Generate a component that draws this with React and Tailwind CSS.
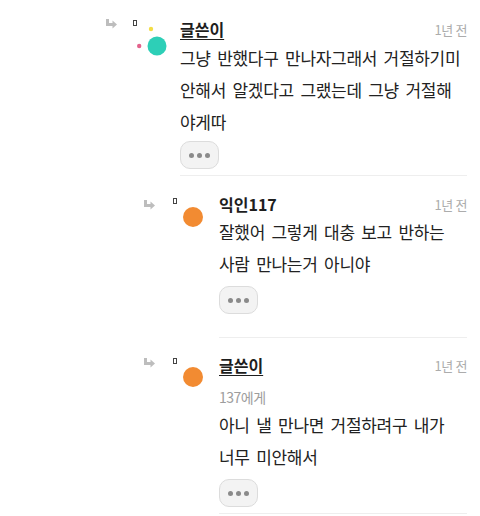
import React from "react";

const font = { fontFamily: '"Noto Sans CJK KR", "Noto Sans", sans-serif' };

const ReplyArrow = ({ className }) => (
  <svg viewBox="0 0 12 10" width="12" height="10" className={className}>
    <path d="M1 0 H4 V4 H7.5 V1.5 L12 5.5 L7.5 9.5 V7 H1 Z" fill="#bdbdbd" />
  </svg>
);

const Tofu = ({ className }) => (
  <span className={"block w-[4px] h-[6px] border border-[#444] " + className} />
);

const MoreButton = ({ className }) => (
  <button className={"flex h-[28px] w-[39px] items-center justify-center gap-[3px] rounded-[10px] border border-[#dcdcdc] bg-[#f3f3f3] " + className}>
    <span className="h-[5px] w-[5px] rounded-full bg-[#8a8a8a]" />
    <span className="h-[5px] w-[5px] rounded-full bg-[#8a8a8a]" />
    <span className="h-[5px] w-[5px] rounded-full bg-[#8a8a8a]" />
  </button>
);

const Name = ({ children, underline }) => (
  <div className="flex items-start justify-between">
    <span
      className={
        "text-[16px] font-bold leading-[20px] text-[#1e1e1e] " +
        (underline ? "underline decoration-1 underline-offset-[3px]" : "")
      }
    >
      {children}
    </span>
    <span className="pt-[2px] text-[13px] leading-[18px] tracking-[-0.4px] text-[#acacac]">1년 전</span>
  </div>
);

const Body = ({ lines, className }) => (
  <div
    className={"text-[17px] leading-[32px] tracking-[-0.3px] [word-spacing:3px] text-[#222] " + className}
  >
    {lines.map((l) => (
      <div key={l} className="whitespace-nowrap">
        {l}
      </div>
    ))}
  </div>
);

export default function App() {
  return (
    <div className="min-h-[516px] w-[480px] bg-white" style={font}>
      {/* 글쓴이 첫 댓글 */}
      <div className="flex items-start pl-[105px]">
        <ReplyArrow className="mt-[19px] shrink-0" />
        <Tofu className="ml-[16px] mt-[20px] shrink-0" />
        <svg width="43" height="34" className="mt-[24px] shrink-0">
          <circle cx="14" cy="5" r="2.2" fill="#f3dd45" />
          <circle cx="2.2" cy="22" r="2.2" fill="#e3628c" />
          <circle cx="20" cy="22" r="9.5" fill="#2dcfb7" />
        </svg>
        <div className="mr-[13px] flex-1 border-b border-[#eeeeee] pb-[6px] pt-[19px]">
          <Name underline>글쓴이</Name>
          <Body
            className="mt-[3px]"
            lines={["그냥 반했다구 만나자그래서 거절하기미", "안해서 알겠다고 그랬는데 그냥 거절해", "야게따"]}
          />
          <MoreButton className="mt-[3px]" />
        </div>
      </div>

      {/* 익인117 */}
      <div className="flex items-start pl-[143px]">
        <ReplyArrow className="mt-[24px] shrink-0" />
        <Tofu className="ml-[18px] mt-[22px] shrink-0" />
        <svg width="42" height="22" className="mt-[30px] shrink-0">
          <circle cx="16" cy="11" r="10" fill="#f28b32" />
        </svg>
        <div className="mr-[13px] flex-1 border-b border-[#eeeeee] pb-[23px] pt-[18px]">
          <Name>익인117</Name>
          <Body className="mt-[2px]" lines={["잘했어 그렇게 대충 보고 반하는", "사람 만나는거 아니야"]} />
          <MoreButton className="mt-[6px]" />
        </div>
      </div>

      {/* 글쓴이 답글 */}
      <div className="flex items-start pl-[143px]">
        <ReplyArrow className="mt-[20px] shrink-0" />
        <Tofu className="ml-[18px] mt-[20px] shrink-0" />
        <svg width="42" height="22" className="mt-[29px] shrink-0">
          <circle cx="16" cy="10" r="10" fill="#f28b32" />
        </svg>
        <div className="mr-[13px] flex-1 border-b border-[#eeeeee] pb-[6px] pt-[17px]">
          <Name underline>글쓴이</Name>
          <div className="mt-[10px] text-[14px] leading-[24px] tracking-[-0.5px] text-[#9d9d9d]">137에게</div>
          <Body lines={["아니 낼 만나면 거절하려구 내가", "너무 미안해서"]} />
          <MoreButton className="mt-[6px]" />
        </div>
      </div>
    </div>
  );
}
